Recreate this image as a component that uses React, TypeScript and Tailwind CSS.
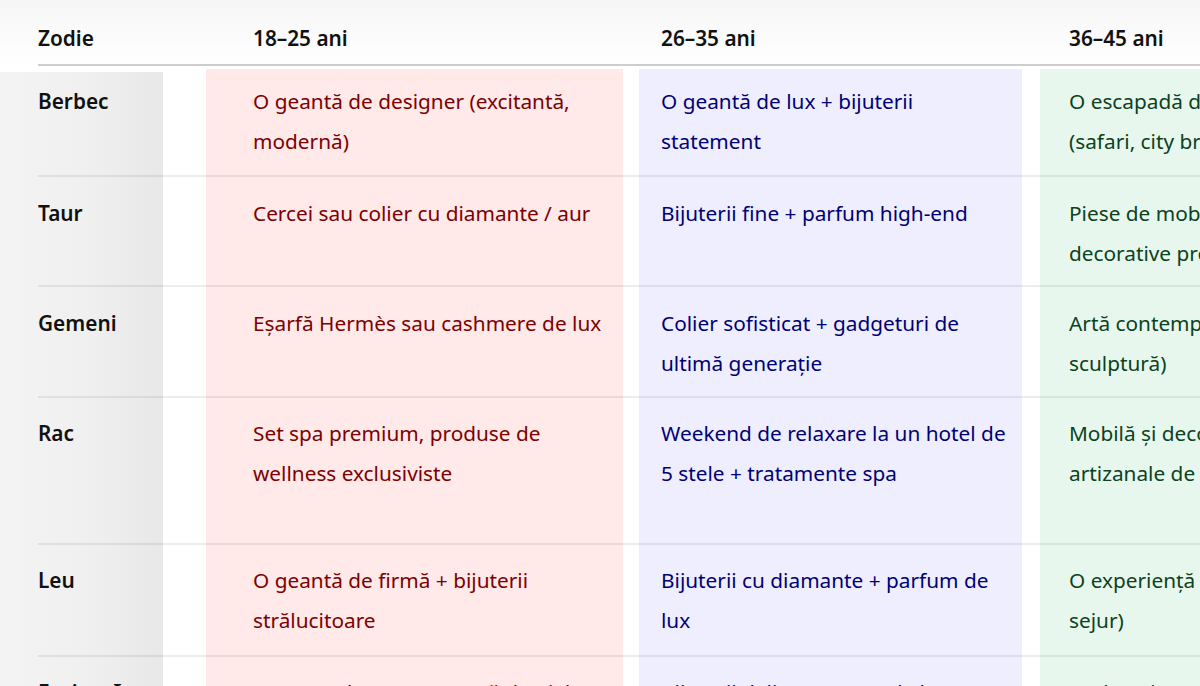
import React from 'react';

type Row = {
  sign: string;
  cells: string[][];
  pt: string;
  row: string;
};

const rows: Row[] = [
  {
    sign: 'Berbec',
    pt: 'pt-[15px]',
    row: 'row-start-3',
    cells: [
      ['O geantă de designer (excitantă,', 'modernă)'],
      ['O geantă de lux + bijuterii', 'statement'],
      ['O escapadă de lux', '(safari, city break)'],
    ],
  },
  {
    sign: 'Taur',
    pt: 'pt-[18px]',
    row: 'row-start-4',
    cells: [
      ['Cercei sau colier cu diamante / aur'],
      ['Bijuterii fine + parfum high-end'],
      ['Piese de mobilier sau obiecte', 'decorative premium'],
    ],
  },
  {
    sign: 'Gemeni',
    pt: 'pt-[18px]',
    row: 'row-start-5',
    cells: [
      ['Eșarfă Hermès sau cashmere de lux'],
      ['Colier sofisticat + gadgeturi de', 'ultimă generație'],
      ['Artă contemporană (pictură,', 'sculptură)'],
    ],
  },
  {
    sign: 'Rac',
    pt: 'pt-[17px]',
    row: 'row-start-6',
    cells: [
      ['Set spa premium, produse de', 'wellness exclusiviste'],
      ['Weekend de relaxare la un hotel de', '5 stele + tratamente spa'],
      ['Mobilă și decorațiuni', 'artizanale de lux'],
    ],
  },
  {
    sign: 'Leu',
    pt: 'pt-[17px]',
    row: 'row-start-7',
    cells: [
      ['O geantă de firmă + bijuterii', 'strălucitoare'],
      ['Bijuterii cu diamante + parfum de', 'lux'],
      ['O experiență de lux (vacanță,', 'sejur)'],
    ],
  },
  {
    sign: 'Fecioară',
    pt: 'pt-[17px]',
    row: 'row-start-8',
    cells: [
      ['Un ceas elegant + geantă de piele'],
      ['Bijuterii delicate + ceas de lux'],
      ['Sculpturi sau obiecte de design'],
    ],
  },
];

const colStart = ['col-start-3', 'col-start-5', 'col-start-7'];
const colPad = ['pl-[47px]', 'pl-[22px]', 'pl-[29px]'];
const colText = ['text-[#7c0000]', 'text-[#000075]', 'text-[#0b4220]'];

export default function App() {
  return (
    <div
      className="w-[1200px] h-[686px] overflow-hidden bg-white text-[20.8px] text-[#111]"
      style={{ fontFamily: '"Noto Sans", "DejaVu Sans", sans-serif' }}
    >
      <div className="grid w-[1440px] grid-cols-[163px_43px_417px_16px_383px_18px_400px] grid-rows-[64px_2px_109px_110px_111px_147px_112px_80px]">
        {/* header */}
        <div className="row-start-1 col-start-1 col-span-7 bg-gradient-to-b from-[#f6f6f6] to-white" />
        <div className="row-start-1 col-start-1 pl-[38px] pt-[18px] font-semibold leading-[40px]">
          Zodie
        </div>
        <div className="row-start-1 col-start-3 pl-[47px] pt-[18px] font-semibold leading-[40px]">
          18–25 ani
        </div>
        <div className="row-start-1 col-start-5 pl-[22px] pt-[18px] font-semibold leading-[40px]">
          26–35 ani
        </div>
        <div className="row-start-1 col-start-7 pl-[29px] pt-[18px] font-semibold leading-[40px]">
          36–45 ani
        </div>
        <div className="row-start-2 col-start-1 col-span-7 ml-[38px] bg-[#cdcdcd]" />

        {/* column backgrounds */}
        <div className="row-start-3 row-end-9 col-start-1 mt-[6px] bg-gradient-to-r from-[#f3f3f3] via-[#f0f0f0] to-[#e8e8e8]" />
        <div className="row-start-3 row-end-9 col-start-3 mt-[3px] bg-[#ffe9e9]" />
        <div className="row-start-3 row-end-9 col-start-5 mt-[3px] bg-[#eeeeff]" />
        <div className="row-start-3 row-end-9 col-start-7 mt-[3px] bg-[#e8f7ee]" />

        {rows.map((r, i) => (
          <React.Fragment key={r.sign}>
            {i > 0 && (
              <div
                className={`${r.row} col-start-1 col-span-7 ml-[38px] h-[2px] self-start bg-black/[0.07]`}
              />
            )}
            <div className={`${r.row} col-start-1 pl-[38px] ${r.pt} font-semibold leading-[40px]`}>
              {r.sign}
            </div>
            {r.cells.map((lines, c) => (
              <div
                key={c}
                className={`${r.row} ${colStart[c]} ${colPad[c]} ${r.pt} ${colText[c]} leading-[40px] whitespace-nowrap`}
              >
                {lines.map((l) => (
                  <div key={l}>{l}</div>
                ))}
              </div>
            ))}
          </React.Fragment>
        ))}
      </div>
    </div>
  );
}
